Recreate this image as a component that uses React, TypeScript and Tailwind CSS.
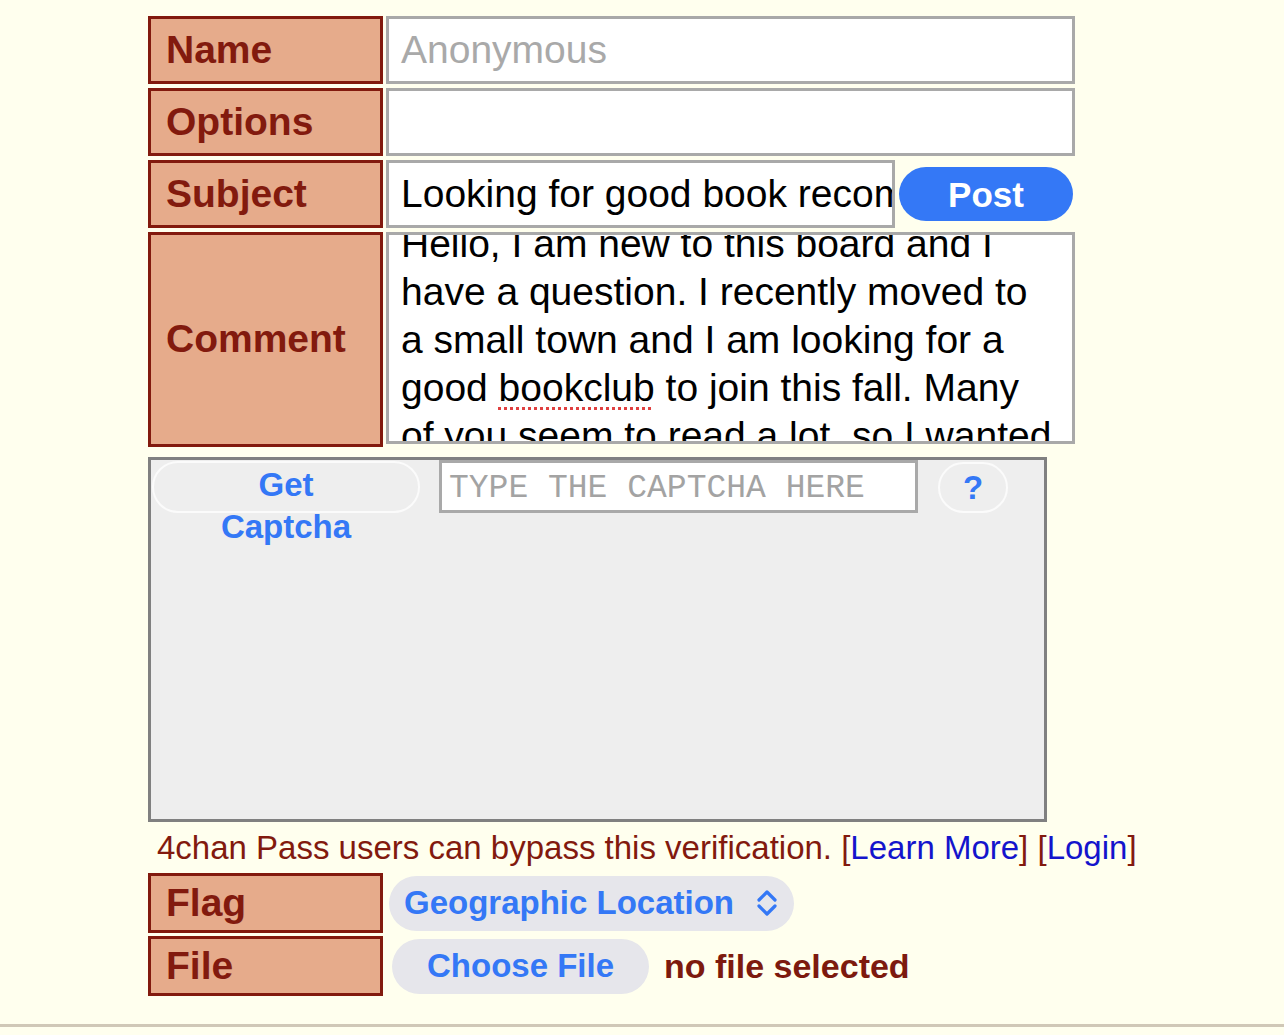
import React from "react";

function Label({ children, className = "" }: { children: React.ReactNode; className?: string }) {
  return (
    <div
      className={`w-[235px] shrink-0 border-[3px] border-[#821a0e] bg-[#e6ab8b] flex items-center pl-[15px] text-[39px] font-bold text-[#821a0e] ${className}`}
    >
      {children}
    </div>
  );
}

function UpDownIcon() {
  return (
    <svg width="22" height="28" viewBox="0 0 22 28" fill="none" stroke="#3478f6" strokeWidth="3.2" strokeLinecap="round" strokeLinejoin="round">
      <path d="M3 11 L11 3 L19 11" />
      <path d="M3 17 L11 25 L19 17" />
    </svg>
  );
}

export default function App() {
  return (
    <div className="min-h-screen bg-[#ffffee] font-['Liberation_Sans',Arial,sans-serif]">
      <div className="pl-[148px] pt-[16px] pb-[28px]">
        {/* post form */}
        <div className="flex flex-col gap-[4px] w-[927px]">
          <div className="flex gap-[3px] h-[68px]">
            <Label>Name</Label>
            <div className="flex-1 border-[3px] border-[#a9a9a9] bg-white flex items-center pl-[12px] text-[39px] text-[#a9a9a9]">
              Anonymous
            </div>
          </div>
          <div className="flex gap-[3px] h-[68px]">
            <Label>Options</Label>
            <div className="flex-1 border-[3px] border-[#a9a9a9] bg-white" />
          </div>
          <div className="flex gap-[3px] h-[68px] items-center">
            <Label className="h-full">Subject</Label>
            <div className="w-[509px] h-full border-[3px] border-[#a9a9a9] bg-white flex items-center pl-[12px] text-[39px] text-black overflow-hidden whitespace-nowrap">
              Looking for good book recommendations
            </div>
            <button className="ml-[1px] w-[174px] h-[54px] rounded-full bg-[#3478f6] text-white font-bold text-[35px] leading-none">
              Post
            </button>
          </div>
          <div className="flex gap-[3px] h-[215px] items-start">
            <Label className="h-full">Comment</Label>
            <div className="flex-1 h-[212px] border-[3px] border-[#a9a9a9] bg-white overflow-hidden pl-[12px] pr-[14px]">
              <p className="-mt-[15px] text-[39px] leading-[48px] text-black">
                Hello, I am new to this board and I have a question. I recently moved to a small town and I am looking
                for a good{" "}
                <span className="underline decoration-dotted decoration-[#e04040] decoration-[3px] underline-offset-[6px]">bookclub</span>{" "}
                to join this fall. Many of you seem to read a lot, so I wanted to ask for some suggestions.
              </p>
            </div>
          </div>
        </div>

        {/* captcha */}
        <div className="mt-[10px] w-[899px] h-[365px] border-[3px] border-[#808080] bg-[#eeeeee] flex items-start">
          <div className="ml-[1px] mt-[1px] w-[268px] h-[52px] shrink-0 rounded-full border-2 border-[#fbfbfb] pt-[1px] px-[40px] text-center text-[33px] leading-[42px] font-bold text-[#3478f6]">
            Get Captcha
          </div>
          <div className="ml-[19px] w-[479px] h-[53px] shrink-0 border-[3px] border-[#a9a9a9] bg-white flex items-center pl-[7px] pt-[4px] font-['Liberation_Mono','Courier_New',monospace] text-[33px] text-[#a3a3a3] whitespace-nowrap">
            TYPE THE CAPTCHA HERE
          </div>
          <div className="ml-[20px] mt-[2px] w-[70px] h-[51px] shrink-0 rounded-full border-2 border-[#fbfbfb] flex items-center justify-center text-[33px] font-bold text-[#3478f6]">
            ?
          </div>
        </div>

        <p className="mt-[7px] pl-[9px] text-[33px] leading-[38px] text-[#821a0e] whitespace-nowrap">
          4chan Pass users can bypass this verification. [<span className="text-[#1414cc]">Learn More</span>] [
          <span className="text-[#1414cc]">Login</span>]
        </p>

        <div className="mt-[6px] flex items-center h-[60px]">
          <Label className="h-full">Flag</Label>
          <div className="ml-[6px] w-[405px] h-[55px] rounded-full bg-[#e6e6eb] flex items-center pl-[15px] pr-[16px] justify-between text-[33px] font-bold text-[#3478f6]">
            <span>Geographic Location</span>
            <UpDownIcon />
          </div>
        </div>
        <div className="mt-[3px] flex items-center h-[60px]">
          <Label className="h-full">File</Label>
          <div className="ml-[9px] w-[257px] h-[55px] rounded-full bg-[#e6e6eb] flex items-center justify-center text-[33px] font-bold text-[#3478f6]">
            Choose File
          </div>
          <span className="ml-[15px] text-[34px] font-bold text-[#7d1a0e]">no file selected</span>
        </div>
      </div>
      <div className="h-[3px] bg-[#d0c8b7]" />
    </div>
  );
}
